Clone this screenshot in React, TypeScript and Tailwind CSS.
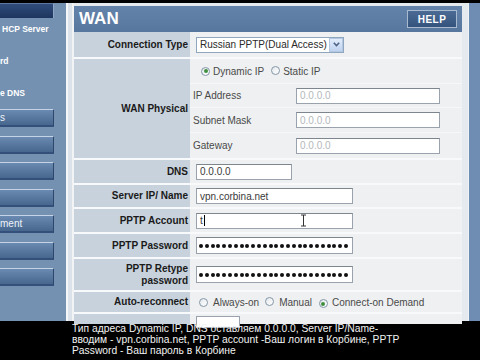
import React from 'react'

const font = { fontFamily: '"Liberation Sans", Arial, sans-serif' }

function Radio({ on }: { on?: boolean }) {
  return (
    <span className="relative inline-flex h-[9px] w-[9px] items-center justify-center rounded-full border border-[#8497a8] bg-gradient-to-br from-[#e4e8ec] to-white">
      {on && <span className="h-[4px] w-[4px] rounded-full bg-[#3f8f3f]" />}
    </span>
  )
}

function Field({ w, value, muted, children }: { w: string; value?: string; muted?: boolean; children?: React.ReactNode }) {
  return (
    <div
      className={`${w} flex h-[16px] items-center overflow-hidden border border-[#9aa3ad] border-t-[#7d858f] bg-white pl-[3px] text-[10px] ${
        muted ? 'text-[#b4b8bc]' : 'text-[#3a3a3a]'
      }`}
    >
      {value}
      {children}
    </div>
  )
}

function Dots() {
  return (
    <div className="flex h-[17px] w-[157px] items-center gap-[1.8px] border border-[#9aa3ad] border-t-[#7d858f] bg-white pl-[2px]">
      {Array.from({ length: 26 }).map((_, i) => (
        <span key={i} className="h-[4px] w-[4px] shrink-0 rounded-full bg-[#111]" />
      ))}
    </div>
  )
}

function Row({ label, h, children }: { label: React.ReactNode; h: string; children: React.ReactNode }) {
  return (
    <div className={`flex ${h}`}>
      <div className="flex w-[116px] shrink-0 items-center justify-end bg-[#c8d2dc] pr-[2px] text-right text-[10px] font-bold leading-[12px] text-[#1a1a1a]">
        {label}
      </div>
      <div className="flex flex-1 items-center bg-[#eef0f1] pl-[6px]">{children}</div>
    </div>
  )
}

function SideButton({ text }: { text?: string }) {
  return (
    <div className="flex h-[18px] w-[54px] items-center border-t border-r border-t-[#c4d3e6] border-r-[#2e486c] border-b-2 border-b-[#34507a] bg-gradient-to-b from-[#6a8ab2] to-[#47678f] text-[10px] text-[#eef3f8]">
      {text}
    </div>
  )
}

export default function App() {
  return (
    <div className="flex h-[360px] w-[480px] flex-col overflow-hidden bg-black" style={font}>
      <div className="h-[3px] shrink-0" />
      <div className="flex h-[318px] shrink-0">
        {/* sidebar */}
        <div className="flex w-[66px] shrink-0 flex-col bg-[#7591b1]">
          <div className="h-[15px] w-[54px] border-t border-r border-t-[#5d77a0] border-r-[#8ea5c4] bg-gradient-to-b from-[#2f4c7a] to-[#1e365f]" />
          <div className="flex flex-col gap-[20px] pt-[5px] text-[8.5px] font-bold leading-[12px] text-white">
            <div className="pl-[2px]">HCP Server</div>
            <div>rd</div>
            <div>e DNS</div>
          </div>
          <div className="mt-[10px] flex flex-col gap-[8.5px]">
            <SideButton text="s" />
            <SideButton />
            <SideButton />
            <SideButton />
            <SideButton text="ment" />
            <SideButton />
            <SideButton />
          </div>
        </div>
        <div className="w-[6px] shrink-0 border-l-2 border-l-[#f4f6f8] bg-[#dbe2e9]" />
        {/* main */}
        <div className="flex w-[396px] shrink-0 flex-col border-l-2 border-l-[#f1f3f5] bg-[#e5eaee] pt-[3px] pr-[6px]">
          <div className="flex h-[26px] shrink-0 items-center justify-between bg-gradient-to-b from-[#6383aa] to-[#57779f] pl-[5px] pr-[5px]">
            <span className="text-[17px] font-bold text-white">WAN</span>
            <span className="flex h-[18px] w-[50px] items-center justify-center border border-[#a9bbd0] bg-gradient-to-b from-[#4b6b95] to-[#34547e] text-[10px] font-bold tracking-[0.5px] text-white">
              HELP
            </span>
          </div>
          <div className="flex flex-col gap-[2px] bg-[#f8f9fa]">
            <Row label="Connection Type" h="h-[25px]">
              <div className="flex h-[16px] w-[148px] items-center justify-between border border-[#8fa6bf] bg-white pl-[3px] text-[10px] text-[#2a2a2a]">
                Russian PPTP(Dual Access)
                <span className="flex h-[14px] w-[14px] items-center justify-center border border-[#b4c8e4] bg-gradient-to-b from-[#e2ecfb] to-[#bfd2f0]">
                  <svg width="7" height="5" viewBox="0 0 7 5">
                    <path d="M0.8 0.8 L3.5 3.6 L6.2 0.8" stroke="#4d6185" strokeWidth="1.5" fill="none" />
                  </svg>
                </span>
              </div>
            </Row>
            <div className="flex h-[99px]">
              <div className="flex w-[116px] shrink-0 items-center justify-end bg-[#c8d2dc] pr-[2px] text-[10px] font-bold text-[#1a1a1a]">
                WAN Physical
              </div>
              <div className="flex flex-1 flex-col bg-[#eef0f1] text-[10px] text-[#4a4a4a]">
                <div className="flex h-[24px] items-center pl-[11px]">
                  <Radio on />
                  <span className="ml-[3px]">Dynamic IP</span>
                  <span className="ml-[7px]"><Radio /></span>
                  <span className="ml-[3px]">Static IP</span>
                </div>
                <div className="flex h-[24px] items-center border-t border-[#f6f7f8]">
                  <span className="w-[106px] pl-[3px]">IP Address</span>
                  <Field w="w-[144px]" value="0.0.0.0" muted />
                </div>
                <div className="flex h-[25px] items-center border-t border-[#f6f7f8]">
                  <span className="w-[106px] pl-[3px]">Subnet Mask</span>
                  <Field w="w-[144px]" value="0.0.0.0" muted />
                </div>
                <div className="flex h-[26px] items-center border-t border-[#f6f7f8]">
                  <span className="w-[106px] pl-[3px]">Gateway</span>
                  <Field w="w-[144px]" value="0.0.0.0" muted />
                </div>
              </div>
            </div>
            <Row label="DNS" h="h-[23px]">
              <Field w="w-[96px]" value="0.0.0.0" />
            </Row>
            <Row label="Server IP/ Name" h="h-[22px]">
              <Field w="w-[157px]" value="vpn.corbina.net" />
            </Row>
            <Row label="PPTP Account" h="h-[23px]">
              <Field w="w-[157px]" value="t">
                <span className="ml-[1px] h-[11px] w-[1px] bg-black" />
                <svg className="ml-[95px]" width="7" height="13" viewBox="0 0 7 13">
                  <path d="M1 1 H6 M3.5 1 V12 M1 12 H6" stroke="#333" strokeWidth="1" fill="none" />
                </svg>
              </Field>
            </Row>
            <Row label="PPTP Password" h="h-[23px]">
              <Dots />
            </Row>
            <Row
              label={
                <span>
                  PPTP Retype
                  <br />
                  password
                </span>
              }
              h="h-[31px]"
            >
              <Dots />
            </Row>
            <Row label="Auto-reconnect" h="h-[20px]">
              <div className="flex items-center pl-[3px] text-[10px] text-[#4a4a4a]">
                <Radio />
                <span className="ml-[5px]">Always-on</span>
                <span className="ml-[6px]"><Radio /></span>
                <span className="ml-[5px]">Manual</span>
                <span className="ml-[7px]"><Radio on /></span>
                <span className="ml-[4px]">Connect-on Demand</span>
              </div>
            </Row>
            <div className="flex h-[10px]">
              <div className="w-[116px] shrink-0 bg-[#c8d2dc]" />
              <div className="flex flex-1 items-start bg-[#eef0f1] pl-[6px] pt-[2px]">
                <div className="h-[12px] w-[44px] border border-[#9aa3ad] bg-white" />
              </div>
            </div>
          </div>
        </div>
        <div className="flex-1 border-l border-l-[#f0f3f6] bg-[#6f8db2]" />
      </div>
      <div className="flex-1 pl-[72px] pt-[3px] text-[10.3px] leading-[10.8px] text-[#f2f2f2]">
        <div className="whitespace-nowrap">Тип адреса Dynamic IP, DNS оставляем 0.0.0.0, Server IP/Name-</div>
        <div className="whitespace-nowrap">вводим - vpn.corbina.net, PPTP account -Ваш логин в Корбине, PPTP</div>
        <div className="whitespace-nowrap">Password - Ваш пароль в Корбине</div>
      </div>
    </div>
  )
}
